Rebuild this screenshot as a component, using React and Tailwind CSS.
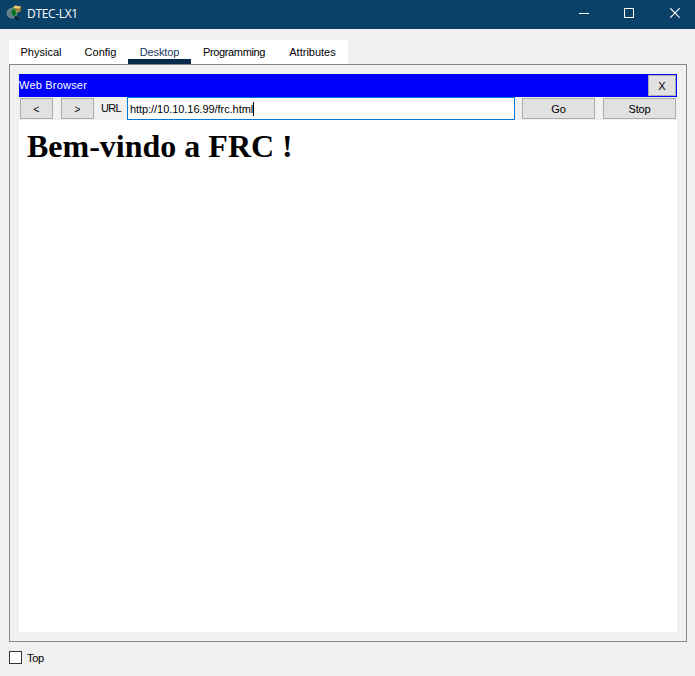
const tabs = [
  { name: 'Physical', box: 'w-[64px]' },
  { name: 'Config', box: 'w-[55px]' },
  { name: 'Desktop', box: 'w-[63px] tracking-[-0.1px]' },
  { name: 'Programming', box: 'w-[86px] tracking-[-0.36px]' },
  { name: 'Attributes', box: 'w-[71px]' },
];

function PushButton({ children, className }) {
  return (
    <button className={`flex shrink-0 items-center justify-center border border-[#adadad] bg-[#e1e1e1] pt-px ${className}`}>
      {children}
    </button>
  );
}

function AppIcon() {
  return (
    <svg width="17" height="17" viewBox="0 0 17 17" className="shrink-0">
      <path d="M7.5 3 10 .6l6 1L15.6 6l-4.4 2.6L7 6z" fill="#bd913b" />
      <path d="M10 .6 16 1.8 13.8 4 7.8 3z" fill="#eecb78" />
      <path d="m9 3.6 4.8 1L16 2.4" fill="none" stroke="#5b431c" strokeWidth=".7" />
      <circle cx="7" cy="8.2" r="4.9" fill="#647f89" stroke="#8ba1a6" strokeWidth=".7" />
      <path d="M7.5 3.6C10.8 4 12 6.2 11.2 9.4L9 11.6 6.8 9.8 6.2 7z" fill="#128534" />
      <path d="m8 6 1.8.7-.4 2.5-1.7.3z" fill="#075018" />
      <path d="m10.5 12 2.7 2.8" stroke="#101d28" strokeWidth="2" strokeLinecap="round" />
    </svg>
  );
}

function TitleBar() {
  return (
    <header className="flex h-[29px] shrink-0 items-start bg-[#0a4168] text-white">
      <div className="flex h-[27px] items-center gap-[5px] pl-[5px]">
        <AppIcon />
        <span className="font-['Open_Sans',sans-serif] text-[12px] leading-[27px] tracking-[-0.33px]">DTEC-LX1</span>
      </div>
      <div className="ml-auto flex pr-[5px] pt-2">
        <svg width="101" height="11" viewBox="0 0 101 11" fill="none" stroke="white">
          <path d="M0 5.5h10" shapeRendering="crispEdges" />
          <path d="M45.5.5h9v9h-9z" shapeRendering="crispEdges" />
          <path d="m91.3.3 9.4 9.4m0-9.4-9.4 9.4" strokeWidth="1.2" />
        </svg>
      </div>
      <div className="w-[10px]" />
    </header>
  );
}

export default function App() {
  return (
    <div className="flex h-[676px] w-[695px] flex-col overflow-hidden bg-[#f0f0f0] font-['Liberation_Sans',Arial,sans-serif] text-[11px] leading-[13px] text-black">
      <TitleBar />
      <nav className="ml-[9px] mt-[11px] flex h-[24px] w-[339px] shrink-0 bg-white">
        {tabs.map((tab) => (
          <button
            key={tab.name}
            className={`${tab.box} flex shrink-0 justify-center whitespace-nowrap pt-[6px] ${
              tab.name === 'Desktop' ? 'border-b-[5px] border-[#0a2a4d] text-[#17375c]' : ''
            }`}
          >
            {tab.name}
          </button>
        ))}
      </nav>
      <main className="ml-[9px] mr-[8px] flex h-[578px] shrink-0 flex-col border border-[#828790] p-[9px]">
        <div className="flex h-[23px] shrink-0 items-center justify-between bg-[#0000ff] pr-px text-white">
          <span className="tracking-[0.2px]">Web Browser</span>
          <PushButton className="h-[21px] w-[28px] text-black">X</PushButton>
        </div>
        <div className="flex h-[23px] shrink-0 items-center px-px">
          <PushButton className="h-[21px] w-[33px] text-[10px]">&lt;</PushButton>
          <PushButton className="ml-2 h-[21px] w-[33px] text-[10px]">&gt;</PushButton>
          <span className="ml-[7px] w-[26px] tracking-[-0.7px]">URL</span>
          <div className="flex h-[23px] w-[388px] items-center border border-[#0078d7] bg-white pl-[2px] pt-px">
            <span className="tracking-[-0.06px]">http://10.10.16.99/frc.html</span>
            <span className="h-[14px] w-px bg-black" />
          </div>
          <PushButton className="ml-[7px] h-[21px] w-[73px]">Go</PushButton>
          <PushButton className="ml-2 h-[21px] w-[73px] tracking-[-0.15px]">Stop</PushButton>
        </div>
        <section className="h-[512px] bg-white pl-2 pt-[8px]">
          <h1 className="whitespace-nowrap font-['Liberation_Serif','Times_New_Roman',serif] text-[32px] font-bold leading-[36px]">
            Bem-vindo a FRC !
          </h1>
        </section>
      </main>
      <label className="ml-[9px] mt-[9px] flex items-start gap-[5px]">
        <span className="h-[13px] w-[13px] border border-[#333333] bg-white" />
        <span className="pt-px tracking-[-0.3px]">Top</span>
      </label>
    </div>
  );
}
